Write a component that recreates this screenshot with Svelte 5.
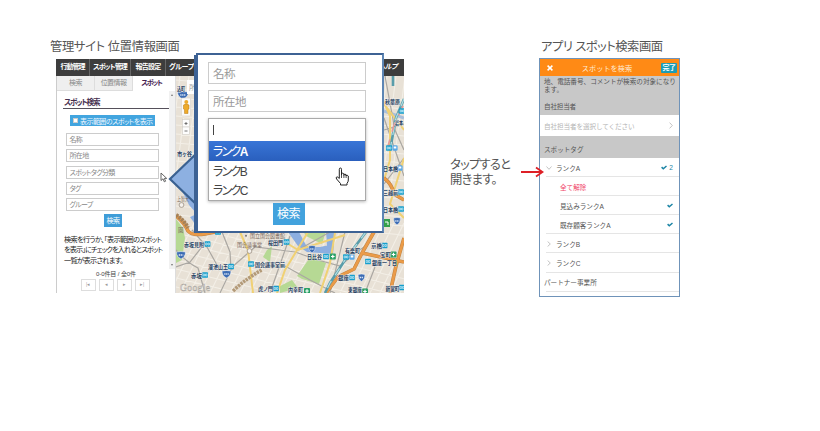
<script>
  const menu = [
    { label: '行動管理', x: 'm1' },
    { label: 'スポット管理', x: 'm2' },
    { label: '報告設定', x: 'm3' },
    { label: 'グループ・', x: 'm4' },
  ];
  const fields = ['名称', '所在地', 'スポットタグ分類', 'タグ', 'グループ'];
  const pager = ['|◂', '◂', '▸', '▸|'];

  // Map geometry
  const minor = [];
  for (let i = 0; i < 26; i++) {
    minor.push(`M${180 + i * 9} 76 l-14 110`);
    minor.push(`M${160 + i * 10} 293 l34 -70`);
    minor.push(`M176 ${80 + i * 9} l250 ${i > 15 ? 60 : 22}`);
  }
  const grey = [
    'M192 230 L207 247 217 265 233 269 M222 232 L230 252 231 270 220 293',
    'M205 243 L190 262 176 267 M176 250 Q186 262 198 268 L205 293',
    'M231 268 L255 247 272 249 295 252 318 260 340 266 353 255 368 244',
    'M253 265 L285 266 310 280 335 293 M290 236 L270 293',
    'M298 250 L330 232 M375 267 L365 293 M385 76 L395 130 404 150',
    'M384 130 L404 124 M384 118 L404 176 M384 184 L404 158 M370 255 L404 262 M345 232 L330 293',
  ];
  const yellow = [
    'M308 232 L285 270 277 293',
    'M285 242 L298 250 L345 235',
    'M240 232 L248 250 253 293',
    'M335 233 L330 263 320 293',
    'M383 100 L390 116 390 160 384 180',
    'M384 104 L404 130 M404 158 L390 204 404 218',
  ];
  const orange = [
    'M176 216 Q184 222 188 231 Q192 236 205 234 L215 232',
    'M374 232 L362 253 354 269 338 277 326 293',
    'M362 253 L404 262',
    'M404 238 L396 266 390 293',
    'M384 178 Q392 184 394 194 L404 200',
  ];
  const stations = [
    [207.5, 244], [205, 275], [231, 266.5], [251, 264], [276, 288.5], [286.5, 242],
    [326, 256.5], [346, 257], [384.5, 245.5], [368, 261.5], [352, 277.5], [402, 287.5],
    [389, 148], [402, 111], [401, 192], [401, 209], [197, 153], [218, 232],
  ];
  const green = [[332.8, 256.5], [393.5, 254.5], [307, 291], [365, 291.5]];
  const shields = [[181, 255, 9], [226.5, 274, 9], [312, 249, 7], [361.5, 277.5, 7], [397, 221, 7], [183, 95, 11]];
  const places = [
    ['赤坂見附', 184, 246.5, 20], ['赤坂', 191, 277.5, 11], ['溜池山王', 208, 269, 20],
    ['国会議事堂前', 255, 267, 30], ['虎ノ門', 258, 291, 15], ['桜田門', 268, 244.5, 15],
    ['日比谷', 307, 259, 15], ['有楽町', 345, 253, 15], ['京橋', 371, 248, 11],
    ['宝町', 380, 257, 11], ['銀座一丁目', 372, 264.5, 25], ['銀座', 338, 280, 11],
    ['新富町', 385.5, 290.5, 14], ['内幸町', 288, 292, 15], ['東銀座', 348, 292.2, 14],
    ['秋葉原', 385, 104, 15], ['岩本', 395, 125, 8], ['日本橋', 383, 171, 15],
    ['三越前', 383, 194.5, 15], ['日本橋', 383, 212, 15], ['市ヶ谷', 177, 155.5, 15], ['込町', 177, 91, 8],
  ];
</script>

{#snippet tick()}
  <svg class="tick" viewBox="0 0 6 5"><path d="M.6 2.1 2.3 3.7 5.500 1" /></svg>
{/snippet}

<main>
  <section class="admin">
    <h2>管理サイト 位置情報画面</h2>
    <div class="browser">
      <nav>
        {#each menu as item}<span class={item.x}>{item.label}</span>{/each}
        <span class="help">ヘルプ</span>
      </nav>
      <div class="body">
        <div class="side">
          <div class="tabs"><span>検索</span><span>位置情報</span><span class="on">スポット</span></div>
          <div class="split">
            <div class="panel">
              <h3>スポット検索</h3>
              <div class="show"><i></i>表示範囲のスポットを表示</div>
              {#each fields as f}<div class="field">{f}</div>{/each}
              <div class="go">検索</div>
              <p>検索を行うか、「表示範囲のスポット<br /><span class="l2">を表示」にチェックを入れるとスポット</span><br />一覧が表示されます。</p>
              <div class="count">0-0件目 / 全0件</div>
              <div class="pager">{#each pager as p}<span>{p}</span>{/each}</div>
            </div>
            <div class="scroll"><i class="up"></i><i class="down"></i></div>
          </div>
        </div>
        <svg class="map" viewBox="176 76 228 217">
          <rect x="176" y="76" width="228" height="217" fill="#e8e1d6" />
          <path d={minor.join('')} stroke="#f3efe7" stroke-width="1.100" fill="none" />
          <path d="M176 219 L183 228 185 238 182 260 176 263Z M311 256 L326 263 319 284 302 279 297 276Z M267 250 L272 246 270 262 263 257Z M303 231 L326 231 322 244 306 236Z M280 286 L292 280 298 288 280 293Z" fill="#b6d994" />
          <path d="M176 182 L185 190 187 183Z" fill="#cfe6ac" />
          <path d="M288 232 L299 232 307 247 320 247 334 244 333 254 307 252 298 246Z M326 231 L335 231 333 246 327 246Z M176 178 L197 153 197 214 189 205Z M190 217 L197 214 198 228Z" fill="#8caee0" />
          <path d="M176 184 L197 160 M384 111 L404 118" stroke="#a9bfdc" stroke-width="3" />
          <path d={grey.join('')} stroke="#aaa7a2" stroke-width="1.200" fill="none" />
          <path d={yellow.join('')} stroke="#f0d174" stroke-width="2" fill="none" />
          <path d={orange.join('')} stroke="#bf8444" stroke-width="3.600" fill="none" />
          <path d={orange.join('')} stroke="#eb9b48" stroke-width="2.600" fill="none" />
          <path d="M233 291 Q248 277 262 270" stroke="#b39a78" stroke-width="3.500" stroke-dasharray="2.500 .8" fill="none" />
          <path d="M176 215 Q184 220 188 228" stroke="#a58158" stroke-width="4" stroke-dasharray="2.500 .8" fill="none" />
          <path d="M366 232 L345 260 330 283 325 293 M404 99 L396 118 390 150 M393 76 V86" stroke="#599daa" stroke-width="2.600" fill="none" />
          <path d="M366 232 L345 260 330 283 325 293 M404 99 L396 118 390 150" stroke="#b4dee3" stroke-width="1.200" stroke-dasharray="8 7" fill="none" />
          <path d="M403 106 L394 125 388 146" stroke="#e69a98" stroke-width="1.600" stroke-dasharray="10 8" fill="none" />
          {#each stations as [x, y]}
            <rect x={x - 2.9} y={y - 2.8} width="5.800" height="5.600" rx=".6" fill="#169fcd" />
            <path d={`M${x - 1.8} ${y - 1}h1.4v2h-1.4z M${x + 0.5} ${y - 1}h1.4v2h-1.4z`} fill="none" stroke="#e4f7fc" stroke-width=".6" />
          {/each}
          {#each [[352, 257], [395, 148], [400, 168]] as [x, y]}
            <rect x={x - 2.6} y={y - 2.8} width="5.200" height="5.600" rx="1.300" fill="#5ba9e7" /><rect x={x - 1.3} y={y - 1.5} width="2.600" height="2" fill="#fff" />
          {/each}
          {#each green as [x, y]}
            <rect x={x - 3} y={y - 3} width="6" height="6" rx=".8" fill="#29a066" /><path d={`M${x - 1.8} ${y}h3.6M${x} ${y - 1.8}v3.6`} stroke="#fff" stroke-width="1.200" />
          {/each}
          <rect x="383" y="219" width="7" height="8" fill="#34a04b" /><path d="M385 222h3v3" fill="none" stroke="#fff" />
          {#each shields as [x, y, w]}
            <path d={`M${x - w / 2} ${y - 3}Q${x} ${y - 4} ${x + w / 2} ${y - 3}Q${x + w / 2} ${y + 2} ${x} ${y + 4}Q${x - w / 2} ${y + 2} ${x - w / 2} ${y - 3}`} fill="#3c6cb4" stroke="#fff" stroke-width=".5" />
            <path d={`M${x - w / 4} ${y}h${w / 2}`} stroke="#dfe8f5" stroke-width="1.600" stroke-dasharray="1.300 .6" />
          {/each}
          <g class="names">
            {#each places as [t, x, y, w]}<text {x} {y} textLength={w} lengthAdjust="spacingAndGlyphs">{t}</text>{/each}
          </g>
          <g class="sub">
            <text x="237" y="246.500" textLength="25" lengthAdjust="spacingAndGlyphs">国会議事堂</text>
            <text x="250" y="238" textLength="35" lengthAdjust="spacingAndGlyphs">国立国会図書館</text>
            <text x="177" y="200.500" textLength="12" lengthAdjust="spacingAndGlyphs">上智大</text>
            <text x="178" y="232">園</text>
          </g>
          <g fill="#f5f1ec" stroke="#9a8f83" stroke-width=".8"><circle cx="181.500" cy="205" r="2.400" /><circle cx="249.500" cy="251" r="2.400" /></g>
          <circle cx="246" cy="235.800" r="1" fill="#777" />
          <text class="brand" x="180" y="291">Google</text>
          <rect x="187" y="80" width="20" height="14" fill="#fff" />
          <text class="where" x="189" y="90">所在地</text>
          <rect x="181.500" y="98" width="9" height="18" rx="1" fill="#fafafa" stroke="#d6d2cb" stroke-width=".6" />
          <path d="M183.500 105 q2.500-2 5.500 0 v4 l-1 .5 v4 h-3.500 v-4l-1-.5z" fill="#edaa2b" stroke="#bb7a16" stroke-width=".5" /><circle cx="186.300" cy="102" r="2" fill="#edaa2b" />
          <g fill="#fdfdfd" stroke="#d0cdc7" stroke-width=".6"><rect x="182.500" y="119.500" width="7" height="7.500" /><rect x="182.500" y="127" width="7" height="7.500" /></g>
          <path d="M184.500 123.500h3M186 122v3M184.500 131h3" stroke="#666" stroke-width=".9" />
        </svg>
      </div>
    </div>

    <svg class="pointer" viewBox="0 0 32 58"><path d="M30 2 L2 29 L30 56Z" fill="#8db0e1" stroke="#3a6191" stroke-width="2.200" /></svg>
    <svg class="arrow" viewBox="0 0 8 11"><path d="M1 1v7.500l2-1.700 1.300 3 1.300-.6-1.300-2.800h2.400z" fill="#fff" stroke="#555" stroke-width=".9" /></svg>

    <div class="popup">
      <div class="in">名称</div>
      <div class="in">所在地</div>
      <div class="combo">
        <div class="entry"><i></i></div>
        <div class="opt sel">ランク<b>A</b></div>
        <div class="opt">ランクB</div>
        <div class="opt">ランクC</div>
      </div>
      <div class="find">検索</div>
      <svg class="hand" viewBox="0 0 15 19"><path d="M4.300 11.500V2.300Q4.300 1 5.400 1T6.500 2.300V8V6.800Q7 6 7.900 6.200T8.900 7.300V8.300V7.500Q10 6.700 11.100 7.700V9V8.500Q12.200 7.700 13.300 9V13Q13.300 15 12 16.300V18H5.500V16.500L1.600 12Q.8 10.700 1.500 10.100T3.100 10.400Z" fill="#fff" stroke="#222" stroke-width="1" /><path d="M6.500 8v3M8.900 8v3M11.100 8.500v2.500" stroke="#222" stroke-width=".8" /></svg>
    </div>
  </section>

  <aside>
    <p>タップすると<br />開きます。</p>
    <svg viewBox="0 0 23 12"><path d="M0 6h20M15 1.500L21.500 6 15 10.500" fill="none" stroke="#de1f26" stroke-width="1.800" /></svg>
  </aside>

  <section class="app">
    <h2>アプリ スポット検索画面</h2>
    <div class="phone">
      <header>
        <svg viewBox="0 0 6 6"><path d="M.6.6l4.800 4.800M5.400.6L.6 5.400" stroke="#fff" stroke-width="1.500" /></svg>
        <span class="ttl">スポットを検索</span>
        <span class="done">完了</span>
      </header>
      <div class="note">地、電話番号、コメントが検索の対象になり<br />ます。</div>
      <div class="label owner">自社担当者</div>
      <div class="pick"><span>自社担当者を選択してください</span><svg viewBox="0 0 4 7"><path d="M.6.6l2.700 2.900L.6 6.400" /></svg></div>
      <div class="label tags">スポットタグ</div>
      <div class="row"><svg class="chev dn" viewBox="0 0 6 4"><path d="M.5.5L3 3.300 5.500.5" /></svg><span>ランクA</span><em>{@render tick()}<b>2</b></em></div>
      <div class="row child clear"><span>全て解除</span></div>
      <div class="row child"><span>見込みランクA</span><em>{@render tick()}</em></div>
      <div class="row"><span class="deep">既存顧客ランクA</span><em>{@render tick()}</em></div>
      <div class="row"><svg class="chev" viewBox="0 0 4 6"><path d="M.6.5L3.300 3 .6 5.500" /></svg><span>ランクB</span></div>
      <div class="row"><svg class="chev" viewBox="0 0 4 6"><path d="M.6.5L3.300 3 .6 5.500" /></svg><span>ランクC</span></div>
      <div class="row last"><span class="flat">パートナー事業所</span></div>
    </div>
  </section>
</main>

<style>
  :global(body) { background: #fff; }
  main {
    display: flex; align-items: flex-start; box-sizing: border-box;
    width: 820px; height: 431px; padding: 39px 0 0 50px; overflow: hidden;
    font-family: "Liberation Sans", "Noto Sans CJK JP", sans-serif;
    font-feature-settings: "palt"; color: #444; white-space: nowrap;
  }
  h2 { margin: 0; height: 20px; padding-top: 1px; box-sizing: border-box; font-size: 12.300px; font-weight: 400; line-height: 15px; color: #555; }
  .admin { position: relative; width: 400px; }
  .admin h2 { letter-spacing: -.35px; }
  .browser { width: 348px; margin-left: 6px; }
  nav { display: flex; height: 17px; background: #3d3d3d; color: #fff; font-size: 7px; font-weight: 700; line-height: 16px; }
  nav span { box-sizing: border-box; border-right: 1px solid #666; text-align: center; letter-spacing: -.5px; }
  .m1 { width: 34px; letter-spacing: -1px; }
  .m2 { width: 41px; letter-spacing: -.9px; }
  .m3 { width: 35px; letter-spacing: -.8px; }
  .m4 { width: 32px; border: 0; padding-left: 3px; text-align: left; letter-spacing: -.4px; }
  .help { margin-left: auto; padding-right: 7px; border: 0; font-style: italic; }
  .body { display: flex; }
  .side { box-sizing: border-box; width: 120px; height: 217px; border-left: 1px solid #ccc; border-right: 1px solid #ddd; }
  .tabs { display: flex; height: 15px; width: 113px; font-size: 7px; line-height: 14px; text-align: center; color: #888; }
  .tabs span { box-sizing: border-box; width: 38px; background: #efefef; border: solid #ddd; border-width: 0 1px 1px 0; letter-spacing: -.6px; }
  .tabs .on { width: 37px; border: 0; background: #fff; color: #45204f; font-weight: 700; letter-spacing: -1.200px; }
  .split { display: flex; height: 202px; }
  .panel { width: 112px; padding-left: 6px; box-sizing: border-box; }
  h3 { margin: 6px 0 0; height: 11px; width: 105px; border-bottom: 1.500px solid #55505a; color: #47304f; font-size: 7.600px; line-height: 11px; letter-spacing: -1.200px; font-weight: 700; padding-left: 1px; box-sizing: content-box; }
  .show { display: flex; align-items: center; gap: 2px; box-sizing: border-box; width: 85px; height: 11px; margin: 6px 0 0 7px; padding-left: 3px; background: #42a5df; color: #f2f9ff; font-size: 7px; letter-spacing: -.55px; }
  .show i { width: 5px; height: 5px; background: #fff; border: .5px solid #ccc; box-sizing: border-box; flex: none; }
  .field { box-sizing: border-box; width: 93px; height: 13px; margin: 3.300px 0 0 2.500px; padding-left: 3px; border: 1px solid #ccc; color: #888; font-size: 7px; line-height: 11.500px; letter-spacing: -.65px; }
  .show + .field { margin-top: 7px; }
  .go { width: 18px; height: 13px; margin: 3px 0 0 41px; background: #3f9dd8; color: #fff; font-size: 7px; line-height: 13px; letter-spacing: -.6px; text-align: center; }
  .panel p { margin: 8px 0 0 1px; font-size: 7.200px; line-height: 10.300px; letter-spacing: -.65px; color: #222; }
  .l2 { letter-spacing: -.9px; }
  .count { margin-top: 3px; font-size: 6px; line-height: 10px; color: #444; text-align: center; letter-spacing: -.1px; }
  .pager { display: flex; gap: 3px; margin: 0 0 0 17.500px; }
  .pager span { box-sizing: border-box; width: 15px; height: 12px; border: 1px solid #ddd; color: #999; font-size: 4.500px; line-height: 10px; text-align: center; }
  .scroll { position: relative; width: 6px; height: 178px; background: #f1f1f1; }
  .scroll i { position: absolute; left: 1.500px; border: solid transparent; border-width: 0 1.500px 2px; border-bottom-color: #777; }
  .scroll .up { top: 3px; }
  .scroll .down { bottom: 3px; border-width: 2px 1.500px 0; border-top-color: #777; }
  .map { width: 228px; height: 217px; display: block; font-size: 5.500px; }
  .names { fill: #25405f; font-weight: 700; stroke: #f6f3ee; stroke-width: .7px; paint-order: stroke; }
  .sub { fill: #7c6c63; font-size: 5.500px; }
  .brand { fill: #fff; stroke: #aaa59e; stroke-width: .5px; font-family: "Liberation Serif", serif; font-size: 9.500px; letter-spacing: .4px; }
  .where { fill: #999; font-size: 7px; }
  .pointer { position: absolute; left: 118px; top: 111px; width: 32px; height: 58px; }
  .arrow { position: absolute; left: 110px; top: 133px; width: 8px; height: 11px; }
  .popup { position: absolute; left: 146px; top: 14px; box-sizing: border-box; width: 188px; height: 180px; padding: 7px 0 0 10px; background: #fff; border: 2px solid #3d6294; border-right-color: #5d86b5; font-size: 12px; color: #555; box-shadow: -3px 1px 0 -1px #3d6294; }
  .in, .combo { box-sizing: border-box; width: 158px; }
  .in { height: 22px; margin-bottom: 6px; padding-left: 4px; border: 1px solid #ccc; line-height: 22px; font-size: 11.500px; color: #999; letter-spacing: -.5px; }
  .combo { height: 83px; border: 1px solid #aaa; box-shadow: 0 1px 3px #bbb; line-height: 22px; letter-spacing: -1.700px; color: #444; }
  .entry { height: 22px; padding: 6px 0 0 4px; box-sizing: border-box; }
  .entry i { display: block; width: 1px; height: 10px; background: #444; }
  .opt { padding-left: 4px; height: 19.600px; }
  .sel { background: linear-gradient(#3875d7, #2a5fbd); color: #fff; }
  .find { width: 32px; height: 22px; margin: 2px 0 0 64.500px; background: #42a2dd; color: #fff; line-height: 23px; text-align: center; letter-spacing: -.6px; }
  .hand { position: absolute; left: 137px; top: 112px; width: 15px; height: 19px; }
  aside { display: flex; padding-top: 119px; width: 90px; gap: 11px; }
  aside p { margin: 0; width: 64px; font-size: 12.300px; line-height: 15px; letter-spacing: -.75px; color: #555; }
  aside svg { width: 23px; height: 12px; margin-top: 8px; flex: none; position: relative; z-index: 1; }
  .app h2 { height: 19px; padding-left: 1px; letter-spacing: -.5px; }
  .phone { box-sizing: border-box; width: 141px; height: 239px; margin-left: -1px; border: 1.500px solid #6f93b9; background: #fff; font-size: 6.600px; font-feature-settings: normal; color: #555; overflow: hidden; }
  header { display: flex; align-items: center; box-sizing: border-box; height: 17px; padding: 0 2px 0 7px; background: #ff8a15; color: #ffead4; }
  header svg { width: 6px; height: 6px; }
  .ttl { flex: 1; text-align: center; font-size: 7.200px; }
  .done { width: 16px; height: 10px; border-radius: 1px; background: #1c9cb4; color: #fff; font-size: 7px; font-weight: 700; line-height: 9.500px; text-align: center; letter-spacing: -.4px; }
  .note { height: 22px; padding-left: 4px; background: #c8c8c8; line-height: 7.800px; padding-top: 2px; box-sizing: border-box; }
  .label { background: #c8c8c8; padding-left: 4px; }
  .owner { height: 17px; line-height: 17px; letter-spacing: -.2px; }
  .pick { display: flex; justify-content: space-between; align-items: center; height: 21px; padding: 0 6px 0 4px; color: #b5b5b5; letter-spacing: -.1px; }
  .pick svg { width: 4px; height: 7px; }
  .tags { height: 22px; line-height: 27px; }
  .pick path, .chev path { fill: none; stroke: #aaa; stroke-width: .7; }
  .row { display: flex; align-items: center; box-sizing: border-box; height: 19.100px; margin-left: 6px; padding-top: 1px; border-bottom: 1px solid #e5e5e5; }
  .row > span { margin-left: 4px; }
  .chev { width: 4px; height: 6px; margin: 0 1px; }
  .dn { width: 6px; height: 4px; margin: 0; }
  .child { margin-left: 20px; }
  .row.child > span { margin-left: 0; }
  .row > .deep { margin-left: 14px; }
  .row > .flat { margin-left: -2px; }
  .clear { color: #f04468; }
  em { display: flex; align-items: center; gap: 2px; margin-left: auto; margin-right: 6px; font-style: normal; color: #1b84a5; }
  em b { font-weight: 400; }
  .tick { width: 6px; height: 5px; }
  .tick path { fill: none; stroke: #1b84a5; stroke-width: 1.500; }
</style>
